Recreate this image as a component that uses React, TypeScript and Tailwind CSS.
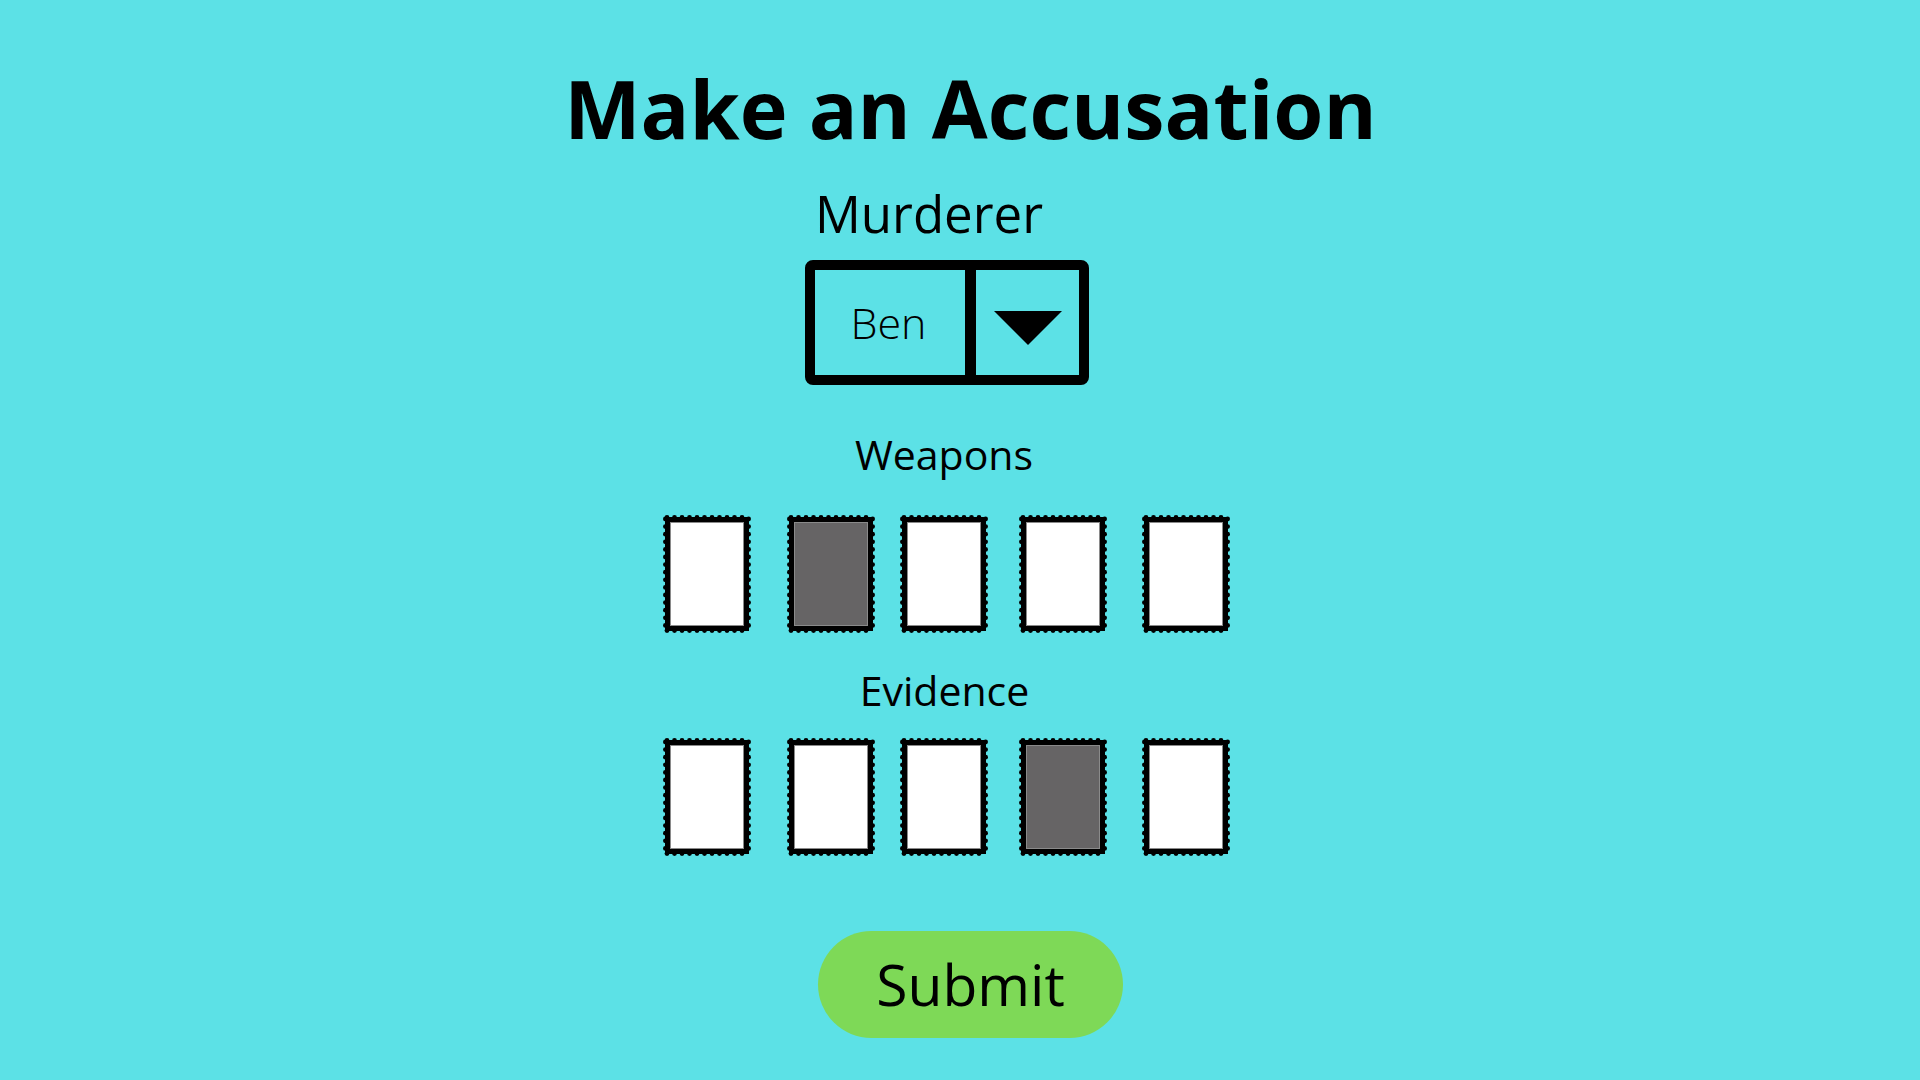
const weapons = [false, true, false, false, false];
const evidence = [false, false, false, true, false];
const cardMargins = ["ml-0", "ml-[36px]", "ml-[25px]", "ml-[31px]", "ml-[35px]"];

function StampCard({ picked }: { picked: boolean }) {
  const w = 88;
  const h = 118;
  const dots: { x: number; y: number }[] = [];
  for (let x = 4; x <= w - 4; x += 7.5) {
    dots.push({ x, y: 2.4 });
    dots.push({ x, y: h - 2.4 });
  }
  for (let y = 4; y <= h - 4; y += 7.6) {
    dots.push({ x: 2.4, y });
    dots.push({ x: w - 2.4, y });
  }
  return (
    <svg width={w} height={h} viewBox={`0 0 ${w} ${h}`} className="block">
      <rect x={2} y={2} width={w - 4} height={h - 4} fill="#000" />
      {dots.map((d, i) => (
        <circle key={i} cx={d.x} cy={d.y} r={2.4} fill="#000" />
      ))}
      <rect
        x={7.5}
        y={7.5}
        width={w - 15}
        height={h - 15}
        fill={picked ? "#666465" : "#ffffff"}
        stroke="#8a8a8a"
        strokeWidth={1}
      />
    </svg>
  );
}

function CardRow({ picks }: { picks: boolean[] }) {
  return (
    <div className="flex mr-[28px]">
      {picks.map((p, i) => (
        <div key={i} className={cardMargins[i]}>
          <StampCard picked={p} />
        </div>
      ))}
    </div>
  );
}

export default function App() {
  return (
    <div
      className="min-h-screen w-full bg-[#5ce1e6] text-black flex flex-col items-center"
      style={{ fontFamily: '"Open Sans", "Liberation Sans", sans-serif' }}
    >
      <h1 className="m-0 mt-[67px] ml-[21px] text-[81px] leading-none font-bold">
        Make an Accusation
      </h1>

      <p className="m-0 mt-[40px] mr-[62px] text-[51px] leading-none">
        Murderer
      </p>

      <div className="mt-[21px] mr-[26px] flex h-[125px] w-[284px] rounded-[8px] border-[10px] border-black">
        <div className="flex flex-1 items-center justify-center">
          <span className="mr-[3px] text-[43px] font-light leading-none">Ben</span>
        </div>
        <div className="w-[11px] bg-black" />
        <div className="flex w-[103px] items-center justify-center">
          <svg width="68" height="34" viewBox="0 0 68 34" className="mt-[11px]">
            <polygon points="0,0 68,0 34,34" fill="#000" />
          </svg>
        </div>
      </div>

      <p className="m-0 mt-[49px] mr-[32px] text-[41px] leading-none">Weapons</p>
      <div className="mt-[40px]">
        <CardRow picks={weapons} />
      </div>

      <p className="m-0 mt-[37px] mr-[31px] text-[41px] leading-none">Evidence</p>
      <div className="mt-[27px]">
        <CardRow picks={evidence} />
      </div>

      <button className="mt-[75px] ml-[21px] flex h-[107px] w-[305px] items-center justify-center rounded-full bg-[#7ed957] text-[57px] leading-none">
        Submit
      </button>
    </div>
  );
}
